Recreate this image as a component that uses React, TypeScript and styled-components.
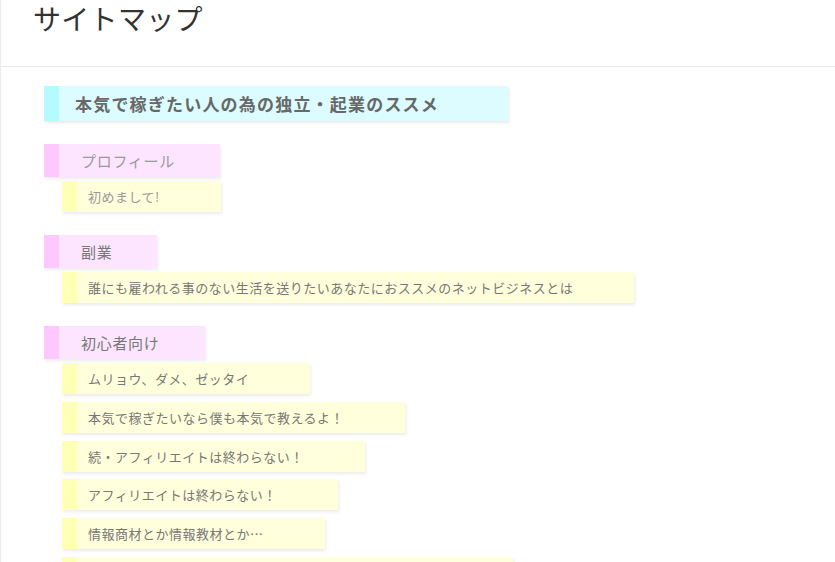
import * as React from 'react';
import styled, { createGlobalStyle } from 'styled-components';

const GlobalStyle = createGlobalStyle`
  html, body {
    margin: 0;
    padding: 0;
    background: #fff;
    overflow: hidden;
  }
  body {
    font-family: "Noto Sans CJK JP", "Noto Sans", sans-serif;
  }
`;

const Page = styled.div`
  min-height: 100vh;
  border-left: 1px solid #ececec;
  box-sizing: border-box;
`;

const Header = styled.header`
  height: 67px;
  border-bottom: 1px solid #e8e8e8;
  padding-left: 32px;
  box-sizing: border-box;
`;

const Title = styled.h1`
  margin: 0;
  font-size: 28px;
  font-weight: 400;
  line-height: 36px;
  letter-spacing: 0.3px;
  color: #333;
`;

const Content = styled.main`
  display: flex;
  flex-direction: column;
  align-items: flex-start;
  gap: 23px;
  padding: 19px 0 0 43px;
`;

const MainHeading = styled.h2`
  margin: 0;
  height: 35px;
  line-height: 35px;
  border-left: 15px solid #b3fbff;
  background: #dcfcff;
  padding: 0 69px 0 16px;
  font-size: 17px;
  font-weight: 700;
  letter-spacing: 1.2px;
  color: #686868;
  box-shadow: 1px 2px 3px rgba(0, 0, 0, 0.09);
`;

const Group = styled.section`
  display: flex;
  flex-direction: column;
  align-items: flex-start;
  gap: 4px;
`;

const Category = styled.h3<{ faded?: boolean }>`
  margin: 0;
  height: 33px;
  line-height: 33px;
  border-left: 15px solid #fdc8ff;
  background: #fee5ff;
  padding: 0 45px 0 22px;
  font-size: 15px;
  font-weight: 400;
  letter-spacing: 0.7px;
  color: ${props => (props.faded ? '#9a9a9a' : '#777')};
  box-shadow: 1px 2px 3px rgba(0, 0, 0, 0.08);
`;

const Entries = styled.ul`
  list-style: none;
  margin: 0 0 0 18px;
  padding: 0;
  display: flex;
  flex-direction: column;
  align-items: flex-start;
  gap: 7.8px;
`;

const Entry = styled.li<{ faded?: boolean }>`
  height: 31px;
  line-height: 31px;
  border-left: 15px solid #ffffb5;
  background: #ffffdc;
  padding: 0 61px 0 11px;
  font-size: 13px;
  letter-spacing: 0.5px;
  white-space: nowrap;
  color: ${props => (props.faded ? '#9a9a9a' : '#777')};
  box-shadow: 1px 2px 3px rgba(0, 0, 0, 0.08);
`;

interface Category {
  name: string;
  faded?: boolean;
  posts: string[];
}

const categories: Category[] = [
  { name: 'プロフィール', faded: true, posts: ['初めまして!'] },
  {
    name: '副業',
    posts: ['誰にも雇われる事のない生活を送りたいあなたにおススメのネットビジネスとは'],
  },
  {
    name: '初心者向け',
    posts: [
      'ムリョウ、ダメ、ゼッタイ',
      '本気で稼ぎたいなら僕も本気で教えるよ！',
      '続・アフィリエイトは終わらない！',
      'アフィリエイトは終わらない！',
      '情報商材とか情報教材とか…',
      'アフィリエイトで本当に稼ぐために必要な三つの考え方とは',
    ],
  },
];

const App: React.FC = () => {
  return (
    <>
      <GlobalStyle />
      <Page>
        <Header>
          <Title>サイトマップ</Title>
        </Header>
        <Content>
          <MainHeading>本気で稼ぎたい人の為の独立・起業のススメ</MainHeading>
          {categories.map(cat => (
            <Group key={cat.name}>
              <Category faded={cat.faded}>{cat.name}</Category>
              <Entries>
                {cat.posts.map(post => (
                  <Entry key={post} faded={cat.faded}>
                    {post}
                  </Entry>
                ))}
              </Entries>
            </Group>
          ))}
        </Content>
      </Page>
    </>
  );
};

export default App;
